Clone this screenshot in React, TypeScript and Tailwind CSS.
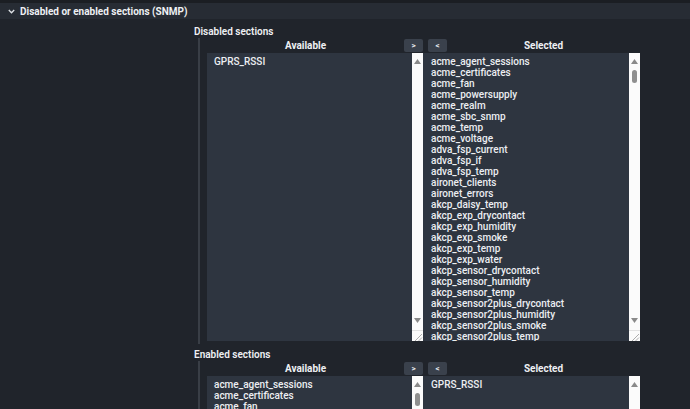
import React from "react";

const selectedItems = [
  "acme_agent_sessions",
  "acme_certificates",
  "acme_fan",
  "acme_powersupply",
  "acme_realm",
  "acme_sbc_snmp",
  "acme_temp",
  "acme_voltage",
  "adva_fsp_current",
  "adva_fsp_if",
  "adva_fsp_temp",
  "aironet_clients",
  "aironet_errors",
  "akcp_daisy_temp",
  "akcp_exp_drycontact",
  "akcp_exp_humidity",
  "akcp_exp_smoke",
  "akcp_exp_temp",
  "akcp_exp_water",
  "akcp_sensor_drycontact",
  "akcp_sensor_humidity",
  "akcp_sensor_temp",
  "akcp_sensor2plus_drycontact",
  "akcp_sensor2plus_humidity",
  "akcp_sensor2plus_smoke",
  "akcp_sensor2plus_temp",
];

const Arrow = ({ down = false }: { down?: boolean }) => (
  <svg width="7" height="5" viewBox="0 0 7 5" className="block">
    {down ? (
      <polygon points="0,0 7,0 3.5,5" fill="#8a8a8a" />
    ) : (
      <polygon points="0,5 7,5 3.5,0" fill="#8a8a8a" />
    )}
  </svg>
);

const Scrollbar = ({ thumb, height }: { thumb: boolean; height: number }) => (
  <div
    className="w-[11px] shrink-0 bg-[#fbfbfb] flex flex-col items-center relative"
    style={{ height }}
  >
    <div className="pt-[6px]">
      <Arrow />
    </div>
    {thumb && <div className="mt-[6px] w-[5px] h-[13px] rounded-full bg-[#8f8f8f]" />}
    <div className="flex-1" />
    <div className="pb-[18px]">
      <Arrow down />
    </div>
    <div className="absolute bottom-0 left-0 w-[11px] h-[11px] border-t border-[#e2e2e2]">
      <svg width="11" height="11" viewBox="0 0 11 11" className="block">
        <line x1="3" y1="10" x2="10" y2="3" stroke="#9a9a9a" strokeWidth="0.8" />
        <line x1="6.5" y1="10" x2="10" y2="6.5" stroke="#9a9a9a" strokeWidth="0.8" />
      </svg>
    </div>
  </div>
);

const ListBox = ({
  items,
  thumb,
  height,
  width,
  padLeft,
}: {
  items: string[];
  thumb: boolean;
  height: number;
  width: string;
  padLeft: string;
}) => (
  <div className={`flex bg-[#2e3540] ${width}`} style={{ height }}>
    <div className={`flex-1 overflow-hidden pt-[3px] ${padLeft}`}>
      {items.map((it) => (
        <div key={it} className="h-[11px] leading-[11px] text-[10px] font-medium text-[#eceef2] whitespace-nowrap">
          {it}
        </div>
      ))}
    </div>
    <Scrollbar thumb={thumb} height={height} />
  </div>
);

const SmallButton = ({ label }: { label: string }) => (
  <div className="w-[19px] h-[13px] rounded-[2px] bg-[#3a414c] flex items-center justify-center text-[8px] font-bold text-[#e8eaee]">
    {label}
  </div>
);

const DualList = ({
  title,
  available,
  selected,
  availThumb,
  selThumb,
  height,
}: {
  title: string;
  available: string[];
  selected: string[];
  availThumb: boolean;
  selThumb: boolean;
  height: number;
}) => (
  <div>
    <div className="h-[14px] flex items-center text-[10px] font-semibold text-[#eef0f3]">{title}</div>
    <div className="ml-[4px] border-l-2 border-[#393e46] pl-[7px] pt-[1px] pb-[3px]">
      <div className="flex">
        <div className="w-[216px]">
          <div className="h-[14px] flex items-start">
            <div className="flex-1 text-center text-[10px] font-bold leading-[13px] text-[#eef0f3]">Available</div>
            <SmallButton label=">" />
          </div>
          <ListBox items={available} thumb={availThumb} height={height} width="w-[216px]" padLeft="pl-[7px]" />
        </div>
        <div className="w-[217px]">
          <div className="h-[14px] flex items-start">
            <div className="ml-[5px]">
              <SmallButton label="<" />
            </div>
            <div className="flex-1 text-center text-[10px] font-bold leading-[13px] text-[#eef0f3]">Selected</div>
          </div>
          <ListBox items={selected} thumb={selThumb} height={height} width="w-[217px]" padLeft="pl-[8px]" />
        </div>
      </div>
    </div>
  </div>
);

export default function App() {
  return (
    <div className="w-[690px] h-[409px] overflow-hidden bg-[#20242b] font-['Roboto',sans-serif]">
      <div className="h-[3px] bg-[#1b1e23]" />
      <div className="h-[16px] bg-[#272c34] flex items-center pl-[8px] gap-[5px]">
        <svg width="7" height="5" viewBox="0 0 7 5" className="block">
          <polyline points="0.8,1 3.5,3.8 6.2,1" fill="none" stroke="#dfe2e6" strokeWidth="1.3" />
        </svg>
        <span className="text-[10px] font-bold text-[#eef0f3]">Disabled or enabled sections (SNMP)</span>
      </div>
      <div className="pl-[194px] pt-[5px] flex flex-col gap-[3px]">
        <DualList
          title="Disabled sections"
          available={["GPRS_RSSI"]}
          selected={selectedItems}
          availThumb={false}
          selThumb={true}
          height={288}
        />
        <DualList
          title="Enabled sections"
          available={selectedItems}
          selected={["GPRS_RSSI"]}
          availThumb={true}
          selThumb={false}
          height={288}
        />
      </div>
    </div>
  );
}
